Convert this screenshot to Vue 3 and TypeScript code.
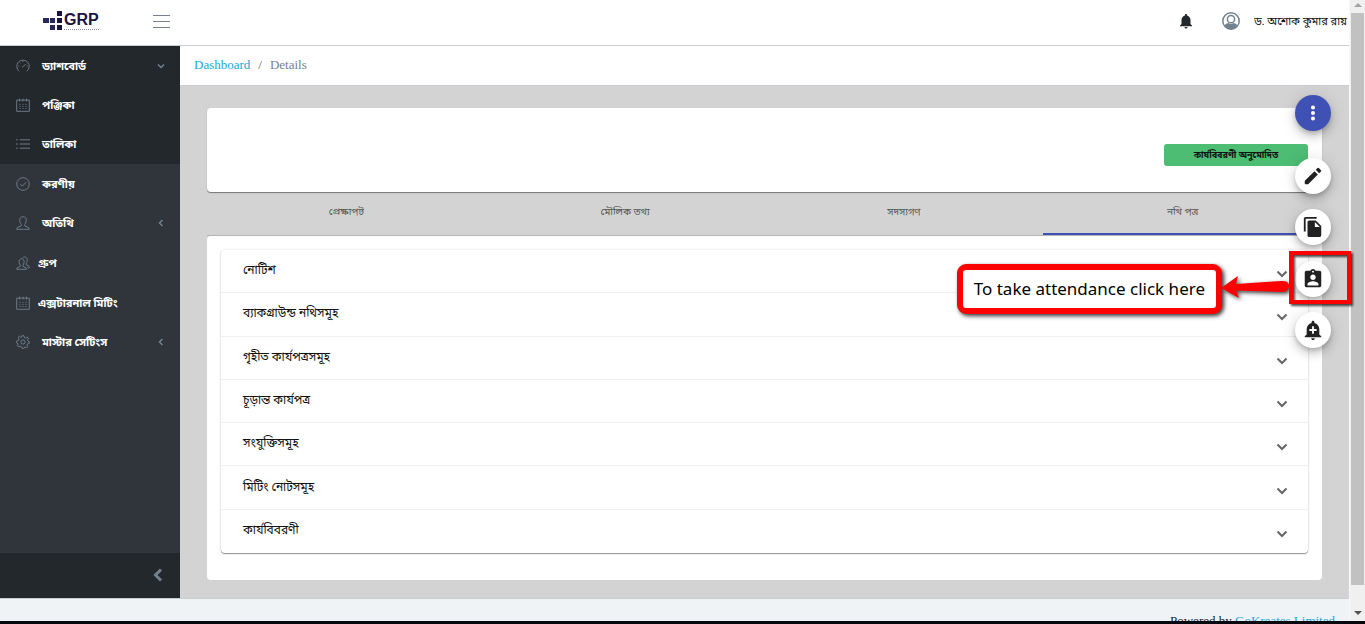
<script setup lang="ts">
import { ref } from 'vue'

interface NavItem {
  label: string
  icon: string
  tight?: boolean
  arrow?: 'down' | 'left'
}

interface FabAction {
  label: string
  path: string
}

const dashboardItems: NavItem[] = [
  { label: 'ড্যাশবোর্ড', icon: 'speed', arrow: 'down' },
  { label: 'পঞ্জিকা', icon: 'calendar' },
  { label: 'তালিকা', icon: 'list' },
]

const otherItems: NavItem[] = [
  { label: 'করণীয়', icon: 'check' },
  { label: 'অতিথি', icon: 'user', arrow: 'left' },
  { label: 'গ্রুপ', icon: 'people', tight: true },
  { label: 'এক্সটারনাল মিটিং', icon: 'calendar', tight: true },
  { label: 'মাস্টার সেটিংস', icon: 'settings', arrow: 'left' },
]

const navGroups = [
  { name: 'open', items: dashboardItems },
  { name: 'rest', items: otherItems },
]

const icons: Record<string, string> = {
  speed: 'M4.5 17.5A8.9 8.9 0 1 1 15.5 17.5M9 11.500L14 7.500M10 3.200V4.500M3.500 10H4.800M15.200 10H16.500M5.500 5.500L6.300 6.300',
  calendar: 'M1 3H19V19H1ZM5 1V5M10 1V5M15 1V5M5 9H6.500M9.250 9H10.750M13.500 9H15M5 12H6.500M9.250 12H10.750M13.500 12H15M5 15H6.500M9.250 15H10.750M13.500 15H15',
  list: 'M0 4H2.500M0 10H2.500M0 16H2.500M5.500 4H20M5.500 10H20M5.500 16H20',
  check: 'M10 1A9 9 0 1 1 10 19A9 9 0 1 1 10 1M6 10L9 13L14.500 7.500',
  user: 'M10 1C6 1 5 4 5.500 7C5.800 9.500 6.500 11 7.500 12V14L2 16.500L1 19H19L18 16.500L12.500 14V12C13.500 11 14.200 9.500 14.500 7C15 4 14 1 10 1Z',
  people: 'M8 4C5 4 4 6.500 4.500 9C4.700 11 5.200 12 6 13V15L1.500 17L1 19H15L14.500 17L10 15V13C10.800 12 11.300 11 11.500 9C12 6.500 11 4 8 4ZM9.500 2.500C12 .5 16 1 16 5C16 8 15.500 9.500 14.500 10.500V12.500L18.500 14.500L19 17H16.500',
  settings: 'M8.600 1H11.400L12 3.700L14 4.500L16.300 3L18 5L16.500 7.300L17.200 9L19 9.600V12L16.600 12.700L15.700 14.600L17 16.700L15 18.300L12.800 17L11.400 19H8.600L7.800 16.700L5.700 15.900L3.500 17L1.800 15L3.300 12.800L1 11.400V8.600L3.400 8L4.300 5.800L3 3.500L5 1.800L7.200 3.300L8 3.300ZM10 7A3 3 0 1 1 10 13A3 3 0 1 1 10 7',
}

const tabs = ['প্রেক্ষাপট', 'মৌলিক তথ্য', 'সদস্যগণ', 'নথি পত্র']
const activeTab = ref(3)

const panels = [
  'নোটিশ',
  'ব্যাকগ্রাউন্ড নথিসমূহ',
  'গৃহীত কার্যপত্রসমূহ',
  'চূড়ান্ত কার্যপত্র',
  'সংযুক্তিসমূহ',
  'মিটিং নোটসমূহ',
  'কার্যবিবরণী',
]

const actions: FabAction[] = [
  {
    label: 'Edit',
    path: 'M3.600 16.700C3.200 17.100 3 17.500 3 18v2.200c0 .5.3.8.8.8H6c.5 0 .9-.2 1.300-.6L17.300 10.400 13.600 6.700zM20.710 7.040a1 1 0 0 0 0-1.410l-2.340-2.340a1 1 0 0 0-1.410 0l-2 2 3.750 3.750z',
  },
  {
    label: 'Copy',
    path: 'M16 1H4c-1.1 0-2 .9-2 2v14h2V3h12V1zm-1 4l6 6v10c0 1.1-.9 2-2 2H7.990C6.890 23 6 22.100 6 21V7c0-1.100.89-2 1.990-2h7zm-1 7h5.500L14 6.500V12z',
  },
  {
    label: 'Attendance',
    path: 'M19 3h-4.180C14.400 1.840 13.300 1 12 1c-1.300 0-2.400.84-2.820 2H5c-1.100 0-2 .9-2 2v14c0 1.100.9 2 2 2h14c1.100 0 2-.9 2-2V5c0-1.100-.9-2-2-2zm-7 0c.55 0 1 .45 1 1s-.45 1-1 1-1-.45-1-1 .45-1 1-1zm0 4c1.660 0 3 1.340 3 3s-1.340 3-3 3-3-1.340-3-3 1.340-3 3-3zm6 12H6v-1.400c0-2 4-3.100 6-3.100s6 1.100 6 3.100V19z',
  },
  {
    label: 'Add reminder',
    path: 'M10.010 21.010c0 1.100.89 1.990 1.990 1.990s1.990-.89 1.990-1.990h-3.980zm8.870-4.190V11c0-3.250-2.250-5.970-5.290-6.690v-.72C13.590 2.710 12.880 2 12 2s-1.590.71-1.590 1.590v.72C7.370 5.030 5.120 7.750 5.120 11v5.820L3 18.940V20h18v-1.060l-2.120-2.120zM16 13.010h-3v3h-2v-3H8V11h3V8h2v3h3v2.010z',
  },
]
</script>

<template>
  <div class="screen">
    <div class="page">
      <header class="topbar">
        <a class="brand" href="#" aria-label="GRP">
          <svg class="brand-mark" viewBox="0 0 20 22" aria-hidden="true">
            <path fill="#27285c" d="M0 8h6v5H0zM7 8h5v5H7zM7 15h5v5H7z" />
            <path fill="#1c1440" d="M14 1h5v5h-5zM14 8h5v5h-5zM14 15h5v5h-5z" />
          </svg>
          <span class="brand-text">
            <span class="brand-name">GRP</span>
            <span class="brand-rule"></span>
          </span>
        </a>
        <button class="icon-btn menu-btn" type="button" aria-label="Menu">
          <svg viewBox="0 0 18 14" aria-hidden="true"><path d="M0 1.500H17M0 7.500H17M0 13.500H17" /></svg>
        </button>
        <div class="top-right">
          <button class="icon-btn bell-btn" type="button" aria-label="Notifications">
            <svg viewBox="0 0 24 24" aria-hidden="true">
              <path d="M12 22c1.100 0 2-.9 2-2h-4c0 1.100.89 2 2 2zm6-6v-5c0-3.070-1.640-5.640-4.500-6.320V4c0-.83-.67-1.500-1.500-1.500s-1.500.67-1.500 1.500v.68C7.630 5.360 6 7.920 6 11v5l-2 2v1h16v-1l-2-2z" />
            </svg>
          </button>
          <button class="user-btn" type="button">
            <svg class="avatar" viewBox="0 0 18 18" aria-hidden="true">
              <circle cx="9" cy="9" r="8.200" fill="none" stroke="#73818f" stroke-width="1.500" />
              <path fill="#73818f" d="M2.500 14C3.200 12 5 11.300 6.500 11a4 4 0 0 0 5 0C13 11.300 14.800 12 15.500 14A8.300 8.300 0 0 1 2.500 14z" />
              <circle cx="9" cy="7.200" r="3.600" fill="none" stroke="#73818f" stroke-width="1.500" />
            </svg>
            <span class="user-name">ড. অশোক কুমার রায়</span>
          </button>
        </div>
      </header>

      <div class="body">
        <aside class="sidebar">
          <nav class="nav">
            <div v-for="group in navGroups" :key="group.name" :class="['nav-group', group.name]">
              <a
                v-for="item in group.items"
                :key="item.label"
                href="#"
                :class="['nav-item', { tight: item.tight }]"
              >
                <svg class="nav-icon" viewBox="0 0 20 20" aria-hidden="true"><path :d="icons[item.icon]" /></svg>
                <span class="nav-label">{{ item.label }}</span>
                <svg v-if="item.arrow" :class="['nav-arrow', item.arrow]" viewBox="0 0 8 8" aria-hidden="true">
                  <path d="M5.500 1L2.500 4L5.500 7" />
                </svg>
              </a>
            </div>
          </nav>
          <button class="minimizer" type="button" aria-label="Collapse sidebar">
            <svg viewBox="0 0 10 14" aria-hidden="true"><path d="M8 1.500L2.500 7L8 12.500" /></svg>
          </button>
        </aside>

        <main class="main">
          <nav class="crumbs" aria-label="Breadcrumb">
            <a href="#">Dashboard</a>
            <span class="slash">/</span>
            <span>Details</span>
          </nav>
          <div class="content">
            <section class="card summary">
              <span class="badge">কার্যবিবরণী অনুমোদিত</span>
            </section>
            <div class="tabs" role="tablist">
              <button
                v-for="(tab, i) in tabs"
                :key="tab"
                type="button"
                role="tab"
                :aria-selected="i === activeTab"
                :class="['tab', { active: i === activeTab }]"
                @click="activeTab = i"
              >
                {{ tab }}
              </button>
            </div>
            <section class="card documents">
              <div class="accordion">
                <button v-for="panel in panels" :key="panel" type="button" class="panel" aria-expanded="false">
                  <span>{{ panel }}</span>
                  <svg viewBox="0 0 12 8" aria-hidden="true"><path d="M1.500 1.500L6 6L10.500 1.500" /></svg>
                </button>
              </div>
            </section>
          </div>
        </main>
      </div>

      <footer class="footer">
        <span>Powered by <a href="#">GoKreates Limited</a></span>
      </footer>

      <div class="fabs">
        <button class="fab primary" type="button" aria-label="More actions">
          <svg viewBox="0 0 24 24" aria-hidden="true">
            <path d="M12 8.200a2.200 2.200 0 1 0 0-4.400 2.200 2.200 0 0 0 0 4.400zM12 14.200a2.200 2.200 0 1 0 0-4.400 2.200 2.200 0 0 0 0 4.400zM12 20.200a2.200 2.200 0 1 0 0-4.400 2.200 2.200 0 0 0 0 4.400z" />
          </svg>
        </button>
        <div class="fab-list">
          <button v-for="action in actions" :key="action.label" class="fab" type="button" :aria-label="action.label">
            <svg viewBox="0 0 24 24" aria-hidden="true"><path :d="action.path" /></svg>
          </button>
        </div>
      </div>

      <div class="callout">
        <div class="callout-box">To take attendance click here</div>
        <svg class="callout-arrow" viewBox="0 0 72 32" aria-hidden="true">
          <path d="M0 16L17 4L15 12L61 9Q69 9 68 15Q67 20 61 20L15 18.500L18 26Z" />
        </svg>
        <div class="callout-frame"></div>
      </div>
    </div>

    <div class="scrollbar" aria-hidden="true">
      <svg class="cap" viewBox="0 0 8 4"><path fill="#a3a3a3" d="M0 4L4 0L8 4z" /></svg>
      <div class="thumb"></div>
      <svg class="cap" viewBox="0 0 8 4"><path fill="#505050" d="M0 0L4 4L8 0z" /></svg>
    </div>
    <div class="edge"></div>
  </div>
</template>

<style>
body {
  margin: 0;
  overflow: hidden;
}
</style>

<style scoped>
.screen {
  display: grid;
  grid-template-columns: minmax(0, 1fr) 16px;
  grid-template-rows: minmax(0, 1fr) 3px;
  height: 100vh;
  font-family: "Liberation Serif", "Noto Sans Bengali", serif;
  font-size: 13px;
  color: #23282c;
}

.screen *,
.screen *::before,
.screen *::after {
  box-sizing: border-box;
}

button {
  border: 0;
  padding: 0;
  background: none;
  font: inherit;
  color: inherit;
  cursor: pointer;
}

a {
  color: #20a8d8;
  text-decoration: none;
}

.page {
  position: relative;
  display: flex;
  flex-direction: column;
  min-width: 0;
}

.topbar {
  flex: none;
  display: flex;
  align-items: center;
  height: 46px;
  padding-left: 43px;
  padding-bottom: 4px;
  border-bottom: 1px solid #c8ced3;
  background: #fff;
}

.brand {
  display: flex;
  gap: 1px;
  width: 110px;
}

.brand-mark {
  width: 20px;
  height: 22px;
}

.brand-text {
  display: flex;
  flex-direction: column;
}

.brand-name {
  font: bold 16px/19px "Liberation Sans", sans-serif;
  color: #1c1440;
}

.brand-rule {
  border-top: 1px dotted #8d8aa5;
}

.icon-btn {
  display: flex;
}

.menu-btn svg {
  width: 18px;
  height: 14px;
  fill: none;
  stroke: #73818f;
  stroke-width: 1;
}

.top-right {
  display: flex;
  align-items: center;
  gap: 27px;
  margin-left: auto;
}

.bell-btn svg {
  width: 18px;
  height: 18px;
  fill: #23282c;
}

.user-btn {
  display: flex;
  align-items: center;
  gap: 14px;
}

.avatar {
  width: 18px;
  height: 18px;
}

.user-name {
  width: 95px;
  overflow: hidden;
  white-space: nowrap;
  text-align: left;
  line-height: 24px;
  font-size: 11px;
  color: #111;
}

.body {
  flex: 1;
  display: flex;
  min-height: 0;
}

.sidebar {
  flex: none;
  display: flex;
  flex-direction: column;
  width: 180px;
  background: #2f353a;
}

.nav {
  flex: 1;
}

.nav-group {
  display: grid;
  grid-auto-rows: 1fr;
}

.nav-group.open {
  height: 118px;
  background: #23282c;
}

.nav-group.rest {
  height: 198px;
}

.nav-item {
  display: flex;
  align-items: center;
  gap: 12px;
  padding: 0 15px 0 16px;
  font-size: 11px;
  font-weight: bold;
  color: #fff;
}

.nav-item.tight {
  gap: 8px;
}

.nav-icon {
  width: 14px;
  height: 14px;
  fill: none;
  stroke: #73818f;
  stroke-width: 1.3;
}

.nav-label {
  white-space: nowrap;
  line-height: 20px;
}

.nav-arrow {
  width: 8px;
  height: 8px;
  margin-left: auto;
  fill: none;
  stroke: #73818f;
  stroke-width: 1.5;
}

.nav-arrow.down {
  transform: rotate(-90deg);
}

.minimizer {
  display: flex;
  align-items: center;
  justify-content: flex-end;
  height: 45px;
  padding: 0 17px 2px 0;
  background: #23282c;
}

.minimizer svg {
  width: 10px;
  height: 14px;
  fill: none;
  stroke: #73818f;
  stroke-width: 3;
}

.main {
  flex: 1;
  min-width: 0;
  background: #d3d3d3;
}

.crumbs {
  display: flex;
  align-items: center;
  gap: 8px;
  height: 40px;
  padding: 0 14px 2px;
  border-bottom: 1px solid #c8ced3;
  background: #fff;
  color: #73818f;
}

.slash {
  color: #5c6873;
}

.content {
  padding: 22px 27px 0;
}

.card {
  border-radius: 4px;
  background: #fff;
  box-shadow: 0 1px 1px rgba(0, 0, 0, 0.45);
}

.summary {
  display: flex;
  align-items: center;
  justify-content: flex-end;
  height: 84px;
  padding: 10px 14px 0;
}

.badge {
  width: 144px;
  border-radius: 3px;
  background: #4dbd74;
  text-align: center;
  font-size: 9px;
  font-weight: bold;
  line-height: 22px;
  color: #111;
}

.tabs {
  display: grid;
  grid-template-columns: repeat(4, 1fr);
  height: 44px;
  border-bottom: 1px solid #b5b5b5;
}

.tab {
  border-bottom: 2px solid transparent;
  font-size: 10px;
  color: #555;
}

.tab.active {
  border-bottom-color: #3f51b5;
}

.documents {
  padding: 14px 14px 27px;
  box-shadow: none;
}

.accordion {
  display: grid;
  grid-auto-rows: 1fr;
  height: 303px;
  border-radius: 4px;
  box-shadow: 0 1px 1px rgba(0, 0, 0, 0.4), 0 0 3px rgba(0, 0, 0, 0.14);
}

.panel {
  display: flex;
  align-items: center;
  justify-content: space-between;
  padding: 0 20px 0 22px;
  border-bottom: 1px solid #f1f1f1;
  font-size: 12px;
  color: #111;
}

.panel:last-child {
  border-bottom-color: transparent;
}

.panel svg {
  width: 12px;
  height: 8px;
  margin-top: 6px;
  fill: none;
  stroke: #666;
  stroke-width: 2;
}

.footer {
  flex: none;
  display: flex;
  justify-content: flex-end;
  height: 23px;
  padding: 14px 14px 0;
  border-top: 1px solid #c8ced3;
  overflow: hidden;
  background: #f0f3f5;
  line-height: 16px;
}

.fabs {
  position: absolute;
  top: 95px;
  right: 18px;
  display: flex;
  flex-direction: column;
  gap: 27px;
}

.fab-list {
  display: flex;
  flex-direction: column;
  justify-content: space-between;
  height: 190px;
}

.fab {
  display: flex;
  align-items: center;
  justify-content: center;
  width: 36px;
  height: 36px;
  border-radius: 50%;
  background: #fff;
  box-shadow: 0 3px 5px -1px rgba(0, 0, 0, 0.2), 0 6px 10px rgba(0, 0, 0, 0.14), 0 1px 18px rgba(0, 0, 0, 0.12);
}

.fab svg {
  width: 22px;
  height: 22px;
  fill: #212121;
}

.fab.primary {
  background: #3f51b5;
}

.fab.primary svg {
  fill: #fff;
}

.callout {
  position: absolute;
  top: 251px;
  right: -2px;
  display: flex;
  align-items: flex-start;
  pointer-events: none;
}

.callout-box {
  margin-top: 13px;
  border: 6px solid #f00;
  border-radius: 9px;
  padding: 0 11px;
  background: #fff;
  box-shadow: 2px 2px 4px rgba(0, 0, 0, 0.8);
  font: 17px/38px "Noto Sans", "Open Sans", sans-serif;
  white-space: nowrap;
  color: #000;
}

.callout-arrow {
  width: 72px;
  height: 32px;
  margin: 21px -4px 0 -1px;
  fill: #f00;
  filter: drop-shadow(2px 2px 2px rgba(0, 0, 0, 0.7));
}

.callout-frame {
  width: 62px;
  height: 53px;
  border: 4px solid #f00;
  filter: drop-shadow(2px 2px 1px rgba(0, 0, 0, 0.7));
}

.scrollbar {
  display: flex;
  flex-direction: column;
  align-items: center;
  border-left: 1px solid #f8f8f8;
  background: #f0f0f0;
}

.cap {
  flex: none;
  width: 8px;
  height: 4px;
  margin: 3px 0 6px;
}

.thumb {
  width: 13px;
  flex: 1;
  margin-bottom: 23px;
  background: #c1c1c1;
}

.edge {
  grid-column: 1 / -1;
  background: #05070d;
}
</style>
